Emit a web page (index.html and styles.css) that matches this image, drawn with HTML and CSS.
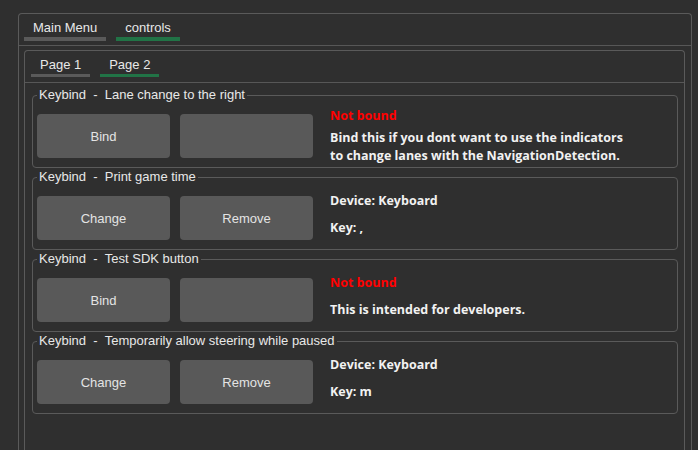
FILE: index.html
```html
<!DOCTYPE html>
<html>
<head>
<meta charset="utf-8">
<link rel="stylesheet" href="styles.css">
</head>
<body>
<div class="window">
  <div class="tabbar">
    <div class="tab"><span>Main Menu</span><i class="bar"></i></div>
    <div class="tab active"><span>controls</span><i class="bar"></i></div>
  </div>
  <div class="frame">
    <div class="tabbar page-tabs">
      <div class="tab"><span>Page 1</span><i class="bar"></i></div>
      <div class="tab active"><span>Page 2</span><i class="bar"></i></div>
    </div>
    <div class="groups">
      <fieldset class="group">
        <legend>Keybind&nbsp; - &nbsp;Lane change to the right</legend>
        <div class="row">
          <button class="btn">Bind</button>
          <button class="btn"></button>
          <div class="info info-multi">
            <div class="status">Not bound</div>
            <div class="desc">Bind this if you dont want to use the indicators<br>to change lanes with the NavigationDetection.</div>
          </div>
        </div>
      </fieldset>
      <fieldset class="group">
        <legend>Keybind&nbsp; - &nbsp;Print game time</legend>
        <div class="row">
          <button class="btn">Change</button>
          <button class="btn">Remove</button>
          <div class="info">
            <div>Device: Keyboard</div>
            <div>Key: ,</div>
          </div>
        </div>
      </fieldset>
      <fieldset class="group">
        <legend>Keybind&nbsp; - &nbsp;Test SDK button</legend>
        <div class="row">
          <button class="btn">Bind</button>
          <button class="btn"></button>
          <div class="info">
            <div class="status">Not bound</div>
            <div>This is intended for developers.</div>
          </div>
        </div>
      </fieldset>
      <fieldset class="group">
        <legend>Keybind&nbsp; - &nbsp;Temporarily allow steering while paused</legend>
        <div class="row">
          <button class="btn">Change</button>
          <button class="btn">Remove</button>
          <div class="info">
            <div>Device: Keyboard</div>
            <div>Key: m</div>
          </div>
        </div>
      </fieldset>
    </div>
  </div>
</div>
</body>
</html>
```

FILE: styles.css
```css
* { box-sizing: border-box; }
html, body { height: 100%; }
body {
  margin: 0;
  background: #2f2f2f;
  font-family: "Liberation Sans", Arial, sans-serif;
  font-size: 13px;
  color: #e8e8e8;
  overflow: hidden;
}
.window {
  margin: 13px 0 0 18px;
  width: 674px;
  height: 460px;
  border: 1px solid #5a5a5a;
  border-bottom: none;
  border-radius: 4px 4px 0 0;
}
.tabbar {
  display: flex;
  gap: 10px;
  padding: 0 5px;
  height: 32px;
  border-bottom: 1px solid #575757;
}
.tab {
  display: flex;
  flex-direction: column;
  align-items: stretch;
  padding-top: 7px;
}
.tab span {
  padding: 0 9px;
  line-height: 14px;
  white-space: nowrap;
}
.tab .bar {
  display: block;
  height: 4px;
  margin-top: 2px;
  background: #5a5a5a;
}
.tab.active .bar { background: #217346; }
.frame {
  margin: 4px 6px 0 5px;
  height: 420px;
  border: 1px solid #5a5a5a;
  border-bottom: none;
  border-radius: 4px 4px 0 0;
}
.page-tabs {
  padding: 0 6px;
  height: 32px;
}
.page-tabs .bar { height: 3px; }
.groups {
  display: flex;
  flex-direction: column;
  gap: 2px;
  padding: 5px 6px 0 7px;
}
.group {
  margin: 0;
  border: 1px solid #5a5a5a;
  border-radius: 4px;
  padding: 12px 4px 9px 4px;
  min-width: 0;
}
.group legend {
  padding: 0 2px;
  line-height: 14px;
  color: #e8e8e8;
  white-space: pre;
}
.row {
  display: flex;
  align-items: flex-start;
  gap: 10px;
  height: 44px;
}
.btn {
  width: 133px;
  height: 44px;
  border: none;
  border-radius: 4px;
  background: #595959;
  color: #e4e4e4;
  font-family: "Liberation Sans", Arial, sans-serif;
  font-size: 13px;
  padding: 0;
}
.info {
  margin-left: 7px;
  margin-top: -3px;
  display: flex;
  flex-direction: column;
  gap: 11px;
  font-family: "Open Sans", "Noto Sans", sans-serif;
  font-weight: 700;
  font-size: 12.5px;
  line-height: 16px;
  color: #f2f2f2;
}
.info-multi {
  margin-top: -6px;
  gap: 5px;
}
.info-multi .desc { line-height: 18px; }
.status { color: #ff0000; }
```
